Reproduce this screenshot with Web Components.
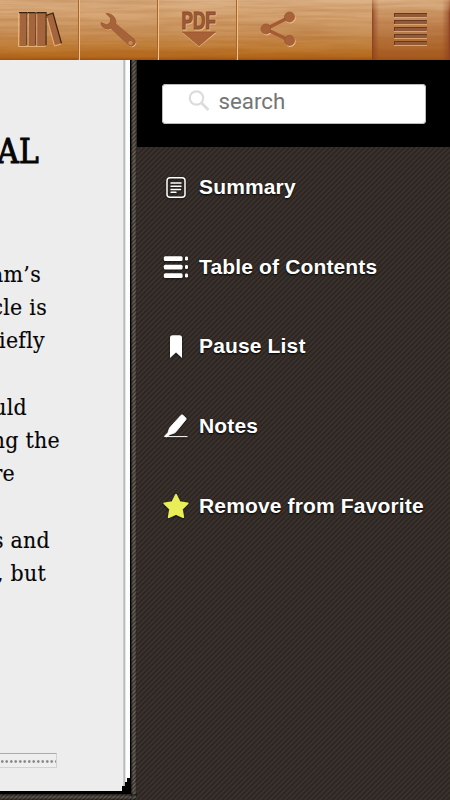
<!DOCTYPE html>
<html lang="en">
<head>
<meta charset="utf-8">
<title>Reader</title>
<style>
  body {
    margin: 0;
    width: 450px;
    height: 800px;
    overflow: hidden;
    background: #000;
    font-family: "Liberation Sans", Arial, sans-serif;
  }
</style>
</head>
<body>
<reader-app></reader-app>

<script>
const ICONS = {
  books: `
    <svg viewBox="0 0 80 60">
      <g fill="#a4643c">
        <path d="M20 12h6v34h-6zM29 12h6v34h-6zM37 12h8v34h-8zM46 15l7-2 8 30-6 2z"/>
      </g>
      <g fill="none" stroke="#3b210f" stroke-width="1.2">
        <path d="M19 12.6h8M27 12v33M28 12.6h7M36 12v33M37 12.6h8.500M46 12v33M46 15.500l7-2.500 8.500 30.500"/>
      </g>
      <path d="M18.500 13v33.500h27M27.800 14v32M36.700 14v32M47 18l7.500 28 7-2" fill="none" stroke="#e9b47c" stroke-width=".9"/>
    </svg>`,
  wrench: `
    <svg viewBox="0 0 80 60">
      <g transform="translate(-.5 0)">
        <path d="M26.500 13.500l4.500 4.500v4l-3.500 3-6-2.500c0 5 5.500 8 10 6l17.500 16.500a4 4 0 0 0 5.500-6L36.500 24c1-5-3.500-11-10-10.500z" fill="#ecb880" transform="translate(.8 1)"/>
        <path d="M26.500 13.500l4.500 4.500v4l-3.500 3-6-2.500c0 5 5.500 8 10 6l17.500 16.500a4 4 0 0 0 5.500-6L36.500 24c1-5-3.500-11-10-10.500z" fill="#a6633a" stroke="#95552f" stroke-width=".7"/>
        <circle cx="51" cy="43" r="2.100" fill="#d18c4c"/>
      </g>
    </svg>`,
  pdf: `
    <svg viewBox="0 0 80 60" font-family="Liberation Sans" font-weight="bold" font-size="23">
      <path d="M23.500 33h34L40 47z" fill="#edba83"/>
      <path d="M23.500 32h33L40 46z" fill="#a86136" stroke="#8f502b" stroke-width=".6"/>
      <g transform="translate(22.500 29) scale(.78 1)">
        <text x="1" y="1" textLength="44" lengthAdjust="spacingAndGlyphs" fill="#efbd88" stroke="#efbd88">PDF</text>
        <text textLength="44" lengthAdjust="spacingAndGlyphs" fill="#9f5b36" stroke="#8a4c2a" stroke-width="1.100">PDF</text>
      </g>
    </svg>`,
  share: `
    <svg viewBox="0 0 80 60">
      <g fill="#efbc84" stroke="#efbc84" transform="translate(.7 1)">
        <circle cx="28" cy="29" r="5"/><circle cx="51.500" cy="17" r="5"/><circle cx="51.500" cy="40.500" r="5"/>
      </g>
      <path d="M51.500 17L28 29l23.500 11.500" fill="none" stroke="#a45b33" stroke-width="3.500"/>
      <g fill="#a8623a" stroke="#94522d" stroke-width=".7">
        <circle cx="28" cy="29" r="5"/><circle cx="51.500" cy="17" r="5"/><circle cx="51.500" cy="40.500" r="5"/>
      </g>
    </svg>`,
  menu: `
    <svg viewBox="0 0 78 60" shape-rendering="crispEdges">
      <path d="M22 15h33M22 22h33M22 29h33M22 36h33M22 43h33" stroke="#dda36e" stroke-width="5" transform="translate(0 .5)"/>
      <path d="M22 15h33M22 22h33M22 29h33M22 36h33M22 43h33" stroke="#915a39" stroke-width="4"/>
      <path d="M22 13.500h33M22 20.500h33M22 27.500h33M22 34.500h33M22 41.500h33M22.500 13v4M22.500 20v4M22.500 27v4M22.500 34v4M22.500 41v4" stroke="#683a22"/>
    </svg>`,
  summary: `
    <svg viewBox="0 0 28 28" fill="none" stroke="#fff" stroke-linecap="round">
      <rect x="5" y="4.700" width="18" height="19.500" rx="3" stroke-width="1.500"/>
      <path d="M9 10h10M9 13.300h10M9 16.500h9.500M9 19.200h5" stroke-width="1.400"/>
    </svg>`,
  contents: `
    <svg viewBox="0 0 28 28" fill="#fff">
      <rect x="1.800" y="3.300" width="18.800" height="4.700" rx="1.500"/>
      <rect x="1.800" y="11.800" width="18.800" height="4.700" rx="1.500"/>
      <rect x="1.800" y="20.300" width="18.800" height="4.700" rx="1.500"/>
      <rect x="23" y="3.500" width="3" height="4" rx="1.200"/>
      <rect x="23" y="12" width="3" height="4" rx="1.200"/>
      <rect x="23" y="20.500" width="3" height="4" rx="1.200"/>
    </svg>`,
  bookmark: `
    <svg viewBox="0 0 28 28"><path d="M8 26V5.700a2.500 2.500 0 0 1 2.500-2.500h7A2.500 2.500 0 0 1 20 5.700V26l-6-5.500z" fill="#fff"/></svg>`,
  notes: `
    <svg viewBox="0 0 28 28" fill="#fff">
      <path d="M19 3.300q1-1 2 0l2.800 2.600q.8.900.1 1.800L14 19.800q-1 1.200-3 1.800l-3 .9-3.500 2.300-2-.5 3.500-3.800 1-3.200q.5-1.500 1.500-2.500z" stroke="#fff" stroke-width=".8"/>
      <path d="M2.500 24.600h23" stroke="#fff" stroke-width="1"/>
    </svg>`,
  star: `
    <svg viewBox="0 0 28 28"><path d="M14 3l3.600 7.300 8 1.100-5.800 5.700 1.400 8-7.200-3.300-7.200 3.300 1.400-8-5.800-5.700 8-1.100z" fill="#e9ed58" stroke="#e9ed58" stroke-width="2" stroke-linejoin="round"/></svg>`
};

class WoodButton extends HTMLElement {
  constructor() {
    super();
    this.attachShadow({ mode: 'open' });
  }

  connectedCallback() {
    this.shadowRoot.innerHTML = `
      <style>
        :host {
          display: block;
          box-sizing: border-box;
          width: 79px;
          height: 60px;
          border-right: 1px solid #f0c188;
          box-shadow: inset -1px 0 #a96429;
        }
        :host([active]) {
          width: 78px;
          margin-left: auto;
          border: 0;
          background:
            linear-gradient(90deg, #8b3f20 0, #8b3f2088 2px, transparent 7px, transparent 70px, #8b3f2088 76px, #8b3f20 78px),
            linear-gradient(#c88a5900, #b26b3a66 35%, #9b501fa0);
          -webkit-mask: linear-gradient(#0006, #000 22%);
          box-shadow: none;
        }
        svg { display: block; width: 80px; height: 60px; }
        :host([active]) svg { width: 78px; }
      </style>
      ${ICONS[this.getAttribute('icon')]}
    `;
  }
}

class ReaderToolbar extends HTMLElement {
  constructor() {
    super();
    this.attachShadow({ mode: 'open' });
  }

  connectedCallback() {
    this.shadowRoot.innerHTML = `
      <style>
        :host { display: grid; height: 60px; }
        .grain, .buttons { grid-area: 1 / 1; }
        .grain {
          width: 450px;
          height: 60px;
          background: linear-gradient(#dcb287 0, #d6a675 25%, #cb955f 50%, #c3823d 76%, #b5681b 95%, #9d500e 100%);
        }
        .buttons { display: flex; width: 450px; }
      </style>
      <svg class="grain" viewBox="0 0 450 60">
        <filter id="grain" x="0" y="0" width="100%" height="100%" color-interpolation-filters="sRGB">
          <feTurbulence type="fractalNoise" baseFrequency=".012 .22" numOctaves="3" seed="8"/>
          <feColorMatrix values="0 0 0 0 .6  0 0 0 0 .3  0 0 0 0 .05  .5 0 0 0 -.17"/>
        </filter>
        <rect width="450" height="60" filter="url(#grain)"/>
      </svg>
      <div class="buttons"><slot></slot></div>
    `;
  }
}

class BookPage extends HTMLElement {
  constructor() {
    super();
    this.attachShadow({ mode: 'open' });
  }

  connectedCallback() {
    this.shadowRoot.innerHTML = `
      <style>
        :host {
          display: block;
          width: 137px;
          height: 740px;
          background:
            linear-gradient(90deg, #000a, transparent 2px, transparent 4px, #0009) 131px 0 / 6px 737px no-repeat,
            repeating-linear-gradient(135deg, #3c352f 0, #6b6359 1.500px, #3c352f 3px);
        }
        .edge {
          box-sizing: border-box;
          width: 131px;
          height: 734px;
          background: #000;
        }
        .sheets {
          width: 130px;
          height: 731px;
          background: linear-gradient(90deg, #ededed 123px, #aaa 124px, #c8caca 125px, #fbfdff 126px);
          clip-path: polygon(0 0, 130px 0, 130px 718px, 127px 718px, 127px 722px, 125px 722px, 125px 726px, 122px 726px, 122px 731px, 0 731px);
          display: flex;
          flex-direction: column;
        }
        .text { height: 693px; overflow: hidden; }
        .progress {
          box-sizing: border-box;
          width: 57px;
          height: 15px;
          border: 1px solid #d2d2d2;
          border-top-color: #aaa;
          border-left: 0;
          background: radial-gradient(circle, #888 1px, transparent 1.600px) 0 1px / 4.500px 13px repeat-x, #eee;
        }
        .rim {
          width: 137px;
          height: 6px;
          background: linear-gradient(#0009, transparent 50%, #0008);
        }
      </style>
      <div class="edge">
        <div class="sheets">
          <div class="text"><slot></slot></div>
          <div class="progress"></div>
        </div>
      </div>
      <div class="rim"></div>
    `;
  }
}

// One line of the page; "end" is where its last letter stops.
class PageLine extends HTMLElement {
  constructor() {
    super();
    this.attachShadow({ mode: 'open' });
  }

  connectedCallback() {
    const end = this.getAttribute('end') || 60;
    this.shadowRoot.innerHTML = `
      <style>
        :host {
          display: flex;
          justify-content: flex-end;
          width: ${end}px;
          height: 33.200px;
          color: #050505;
          font: 22.800px/33.200px "DejaVu Serif Condensed", "DejaVu Serif", serif;
          font-stretch: condensed;
          letter-spacing: .3px;
          white-space: pre;
          -webkit-text-stroke: .15px #050505;
        }
        :host([heading]) {
          height: 106px;
          padding-top: 75px;
          font-size: 33px;
          letter-spacing: .3px;
          -webkit-text-stroke: 1px #050505;
        }
      </style>
      <span><slot></slot></span>
    `;
  }
}

class SearchField extends HTMLElement {
  constructor() {
    super();
    this.attachShadow({ mode: 'open' });
  }

  connectedCallback() {
    this.shadowRoot.innerHTML = `
      <style>
        :host {
          display: block;
          box-sizing: border-box;
          height: 87px;
          padding: 24px 24px 23px 25px;
          background: #000;
        }
        .field {
          display: flex;
          box-sizing: border-box;
          height: 40px;
          padding-left: 26px;
          border-radius: 4px;
          background: #fff;
          box-shadow: inset 0 0 0 1px #bbb;
          color: #757575;
          font: 22.300px/34px Roboto, sans-serif;
        }
        svg { width: 22px; height: 34px; margin-right: 8.500px; }
      </style>
      <div class="field">
        <svg viewBox="0 0 22 34" fill="none" stroke="#dcdcdc" stroke-width="2.200">
          <circle cx="8.500" cy="14" r="6.700"/>
          <path d="M13.500 19l7 7" stroke-width="2.800"/>
        </svg>
        <span><slot></slot></span>
      </div>
    `;
  }
}

class MenuItem extends HTMLElement {
  constructor() {
    super();
    this.attachShadow({ mode: 'open' });
  }

  connectedCallback() {
    this.shadowRoot.innerHTML = `
      <style>
        :host {
          display: flex;
          align-items: center;
          gap: 9px;
          height: 79.750px;
          padding-left: 25px;
          color: #fff;
          font-size: 21px;
          font-weight: bold;
          letter-spacing: .15px;
          white-space: nowrap;
          text-shadow: 0 1px 2px #000;
        }
        svg { width: 28px; height: 28px; filter: drop-shadow(0 1px 1px #0009); }
      </style>
      ${ICONS[this.getAttribute('icon')]}
      <span><slot></slot></span>
    `;
  }
}

class SidePanel extends HTMLElement {
  constructor() {
    super();
    this.attachShadow({ mode: 'open' });
  }

  connectedCallback() {
    this.shadowRoot.innerHTML = `
      <style>
        :host {
          display: block;
          flex: 1;
          height: 740px;
          background: repeating-linear-gradient(135deg, #2a2320 0, #3e3530 1.768px, #2a2320 3.536px);
        }
      </style>
      <slot></slot>
    `;
  }
}

class ReaderApp extends HTMLElement {
  constructor() {
    super();
    this.attachShadow({ mode: 'open' });
  }

  connectedCallback() {
    this.shadowRoot.innerHTML = `
      <style>
        :host { display: block; width: 450px; height: 800px; }
        main { display: flex; height: 740px; }
      </style>
      <reader-toolbar>
        <wood-button icon="books" style="width: 80px"></wood-button>
        <wood-button icon="wrench"></wood-button>
        <wood-button icon="pdf"></wood-button>
        <wood-button icon="share" style="border: 0; box-shadow: none"></wood-button>
        <wood-button icon="menu" active></wood-button>
      </reader-toolbar>
      <main>
        <book-page>
          <page-line heading end="39">AL</page-line>
          <page-line end="41" style="margin-top: 17px">am’s</page-line>
          <page-line end="47">cle is</page-line>
          <page-line end="45">iefly</page-line>
          <page-line></page-line>
          <page-line end="27">uld</page-line>
          <page-line end="60">ng the</page-line>
          <page-line end="15">re</page-line>
          <page-line></page-line>
          <page-line end="50">s and</page-line>
          <page-line end="46">, but</page-line>
        </book-page>
        <side-panel>
          <search-field>search</search-field>
          <menu-item icon="summary">Summary</menu-item>
          <menu-item icon="contents">Table of Contents</menu-item>
          <menu-item icon="bookmark">Pause List</menu-item>
          <menu-item icon="notes">Notes</menu-item>
          <menu-item icon="star">Remove from Favorite</menu-item>
        </side-panel>
      </main>
    `;
  }
}

customElements.define('wood-button', WoodButton);
customElements.define('reader-toolbar', ReaderToolbar);
customElements.define('book-page', BookPage);
customElements.define('page-line', PageLine);
customElements.define('search-field', SearchField);
customElements.define('menu-item', MenuItem);
customElements.define('side-panel', SidePanel);
customElements.define('reader-app', ReaderApp);
</script>
</body>
</html>
